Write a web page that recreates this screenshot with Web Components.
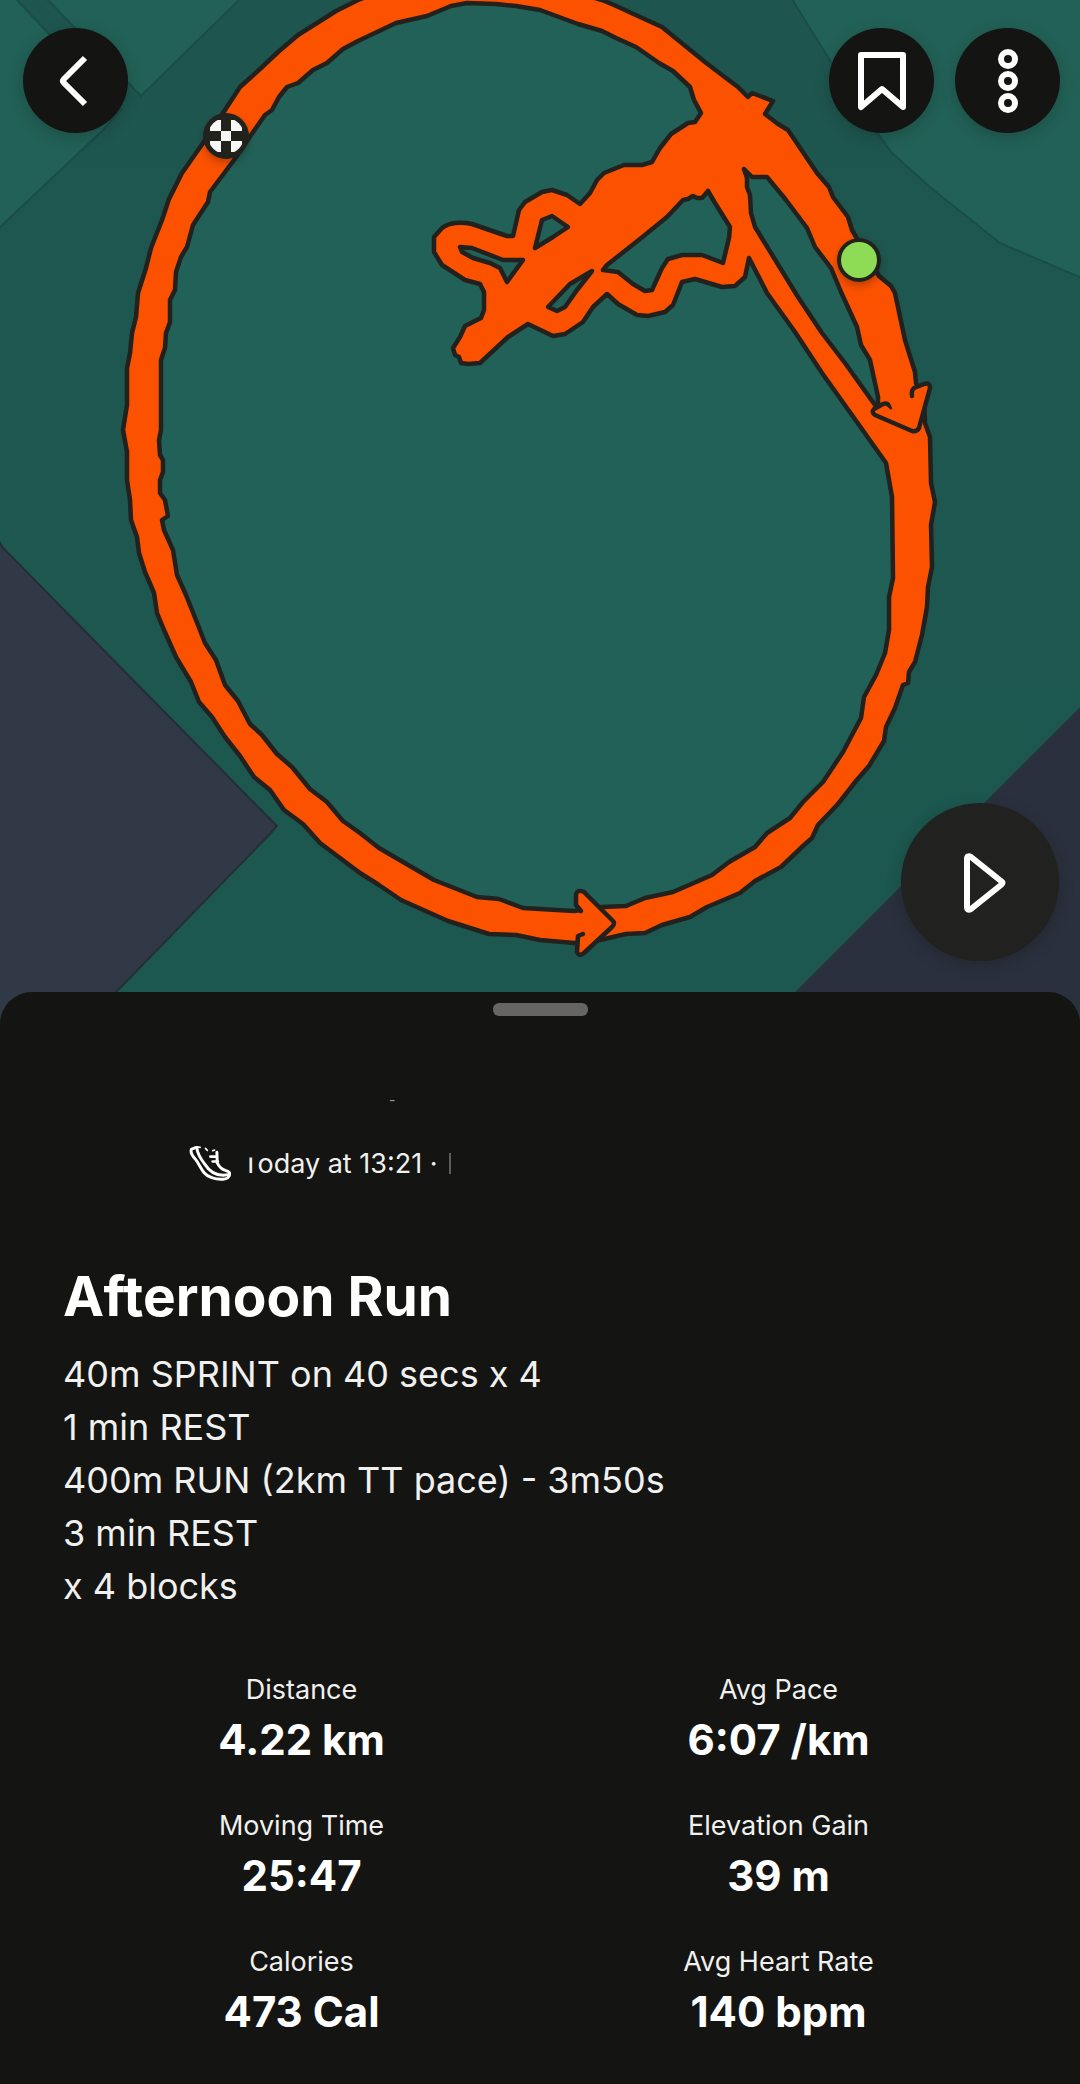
<!DOCTYPE html>
<html lang="en">
<head>
<meta charset="utf-8">
<meta name="viewport" content="width=device-width, initial-scale=1">
<title>Afternoon Run</title>
<style>
  :root {
    --surface: #141412;
    --text: #f0f0ee;
    --text-strong: #fff;
    --route: #fc5200;
    --route-edge: #22211e;
    --gutter: 63px;
  }
  body {
    margin: 0;
    background: var(--surface);
    color: var(--text);
    font-family: Inter, "Liberation Sans", sans-serif;
  }
</style>
</head>
<body>
<activity-page>
  <activity-map slot="map"></activity-map>
  <round-button slot="nav" label="Back">
    <svg viewBox="0 0 105 105"><path d="M62 30 41 51Q39 53 41 55L62 76"/></svg>
  </round-button>
  <round-button slot="actions" label="Save">
    <svg viewBox="0 0 105 105"><path d="M32 79V27H74V79L53 61Z"/></svg>
  </round-button>
  <round-button slot="actions" label="More">
    <svg viewBox="0 0 105 105"><circle cx="53" cy="31" r="7"/><circle cx="53" cy="53" r="7"/><circle cx="53" cy="75" r="7"/></svg>
  </round-button>
  <round-button slot="play" label="Play" size="large">
    <svg viewBox="0 0 158 158"><path d="M70 54Q66 52 66 56V104Q66 108 70 106L100 82Q103 80 100 78Z"/></svg>
  </round-button>

  <activity-sheet>
    <activity-meta slot="meta"></activity-meta>
    <span slot="title">Afternoon Run</span>
    <span slot="description">40m SPRINT on 40 secs x 4
1 min REST
400m RUN (2km TT pace) - 3m50s
3 min REST
x 4 blocks</span>
    <activity-stat label="Distance">4.22 km</activity-stat>
    <activity-stat label="Avg Pace">6:07 /km</activity-stat>
    <activity-stat label="Moving Time">25:47</activity-stat>
    <activity-stat label="Elevation Gain">39 m</activity-stat>
    <activity-stat label="Calories">473 Cal</activity-stat>
    <activity-stat label="Avg Heart Rate">140 bpm</activity-stat>
  </activity-sheet>
</activity-page>

<script>
function define(name, html, setup) {
  const template = document.createElement('template');
  template.innerHTML = html;
  customElements.define(name, class extends HTMLElement {
    constructor() {
      super();
      this.attachShadow({ mode: 'open' });
      this.shadowRoot.appendChild(template.content.cloneNode(true));
    }
    connectedCallback() {
      if (setup) setup(this, this.shadowRoot);
    }
  });
}

define('activity-page', `
  <style>
    :host { display: block; }
    .hero { position: relative; }
    /* controls float over the map */
    .bar {
      position: absolute;
      inset: 0 0 auto 0;
      display: flex;
      justify-content: space-between;
      padding: 28px 20px 0 23px;
    }
    .actions { display: flex; gap: 21px; }
    .play { position: absolute; right: 21px; bottom: 63px; }
  </style>
  <div class="hero">
    <slot name="map"></slot>
    <div class="bar">
      <slot name="nav"></slot>
      <div class="actions"><slot name="actions"></slot></div>
    </div>
    <div class="play"><slot name="play"></slot></div>
  </div>
  <slot></slot>
`);

define('round-button', `
  <style>
    :host { display: block; }
    button {
      display: block;
      width: 105px;
      height: 105px;
      padding: 0;
      border: 0;
      border-radius: 50%;
      background: var(--surface);
      box-shadow: 0 4px 16px rgba(0, 0, 0, 0.2);
      cursor: pointer;
    }
    :host([size="large"]) button {
      width: 158px;
      height: 158px;
      background: #21221f;
    }
    ::slotted(svg) {
      display: block;
      width: 100%;
      height: 100%;
      fill: none;
      stroke: #fff;
      stroke-width: 6;
      stroke-linejoin: round;
    }
  </style>
  <button type="button"><slot></slot></button>
`, (el, root) => {
  root.querySelector('button').setAttribute('aria-label', el.getAttribute('label'));
});

define('activity-map', `
  <style>
    :host { display: block; }
    svg { display: block; width: 100%; height: auto; }
    .field { fill: #226157; stroke: #1a4d47; stroke-width: 2; }
    .block { fill: #303945; stroke: #252e38; stroke-width: 2; }
    .road { fill: #2a303d; }
    .outer { fill: var(--route); }
    .hole { fill: #226157; }
    .outer, .hole, .edge { stroke: var(--route-edge); stroke-width: 4.5; stroke-linejoin: round; }
    .edge { fill: var(--route); stroke-linecap: round; }
  </style>
  <svg viewBox="0 0 1080 1024" role="img" aria-label="Route map">
    <defs>
      <linearGradient id="ground" x1="0" y1="0" x2="0" y2="1">
        <stop offset="0" stop-color="#1e564f"/>
        <stop offset="1" stop-color="#1c584f"/>
      </linearGradient>
      <clipPath id="disc"><circle cx="226" cy="136" r="18"/></clipPath>
      <filter id="soft" x="-50%" y="-50%" width="200%" height="200%"><feDropShadow dx="0" dy="4" stdDeviation="4" flood-opacity="0.25"/></filter>
    </defs>
    <rect width="1080" height="1024" fill="url(#ground)"/>
    <path class="field" d="M-4-4H14L17 0 121 110 103 130 0 227-4 231Z"/>
    <path class="field" d="M44-4 141 96 243-4Z"/>
    <path class="field" d="M790-4 831 62 879 135 891 152 931 188 1000 243 1084 279V-4Z"/>
    <path class="block" d="M-4 536 3 548 269 818 271 820 277 826 269 835 85 1024V1028H-4Z"/>
    <path class="road" d="M1080 707 763 1024H1080Z"/>

    <path class="outer" d="M358 0 336 11 298 35 278 52 260 69 240 87 225 110 203 143 182 173 169 199 162 220 151 248 146 268 138 293 136 317 132 333 130 353 127 368 127 405 123 430 127 452 127 480 130 500 131 520 137 537 139 553 145 572 154 593 157 613 164 630 176 657 191 682 199 702 212 717 225 737 240 756 254 777 270 790 284 810 303 824 320 843 360 873 379 885 401 900 448 921 489 934 516 935 540 940 574 943 600 940 626 934 645 933 662 925 690 917 707 907 740 893 755 881 781 867 803 846 812 838 818 825 838 804 856 781 869 766 884 741 886 727 895 708 903 685 908 683 909 672 915 662 922 635 927 607 928 587 932 567 931 525 935 502 931 483 930 437 925 423 924 400 916 383 915 372 905 340 895 293 891 286 879 276 852 230 848 217 833 197 829 187 817 173 788 130 778 124 765 114 773 101 760 96 752 93 748 97 738 87 726 78 705 62 662 27 614 5 602 0 560-12 480-18 390-12Z"/>
    <path class="hole" d="M251 135 265 115 272 110 279 97 287 87 298 83 313 70 327 63 343 49 358 41 396 23 427 16 451 6 467 3 496 4 516 6 540 10 578 24 602 31 616 38 636 47 659 63 673 71 690 87 694 100 701 113 695 122 688 123 671 134 660 148 652 162 642 165 624 165 604 173 597 180 590 193 580 204 567 195 552 190 542 192 525 202 519 210 513 236 507 236 472 224Q463 222 455 223 447 224 442 228L434 237V252L442 265 465 280 480 284 484 292V310L481 318 465 326 460 337 453 348 455 355 459 357 461 363 468 364 480 363 508 337 528 324 553 336 565 334 583 322 593 307 607 294 618 304 637 315 648 316 665 312 673 305 682 282 695 279 722 287 735 286 745 277 749 258 767 293 795 332 822 373 864 432 886 463 892 497 893 578 889 597 889 630 885 653 876 675 864 697 861 718 843 752 823 782 803 802 790 818 767 833 755 847 729 862 712 875 673 892 645 898 626 906 602 907 574 911 540 909 523 908 499 899 477 897 434 880 379 848 360 833 343 821 327 802 310 789 292 767 277 754 262 735 250 724 238 701 225 685 216 660 205 643 198 625 186 595 177 575 173 550 164 530 162 520 168 516 165 500 160 493 160 480 163 472 163 460 160 455 159 440 161 430 161 360 165 348 166 333 170 322 170 300 175 290 176 272 181 257 187 247 193 225 208 202 210 192 234 160Z"/>
    <path class="hole" d="M744 169 752 177 767 177 786 200 807 228 815 247 831 268 841 292 857 327 861 345 870 360 878 397V407L875 405 845 363 822 333 798 297 755 227 751 213 750 195 747 187V178Z"/>
    <path class="hole" d="M607 265 640 239 667 217 683 200 688 199 693 196 697 198 702 198 708 191 715 203 730 227 729 238 723 263 702 255H682L668 259 662 268 652 290 645 291 633 284 618 272 603 270Z"/>
    <path class="hole" d="M548 307 570 284 592 271 577 290 565 307 557 311Z"/>
    <path class="hole" d="M535 248 542 220 552 216 568 227 553 237Z"/>
    <path class="hole" d="M460 247 472 248 503 260H523L507 282 500 268 490 263 473 258 462 252Z"/>

    <!-- direction arrows -->
    <path class="edge" d="M583 934 578 936 577 952Q579 957 584 953L612 927Q616 923 612 920L584 892Q578 889 576 894V905L581 911"/>
    <path class="edge" d="M891 407Q887 402 883 404L874 409Q871 412 875 415L912 431Q917 432 919 428L930 388Q930 382 924 384L914 388Q911 391 912 396"/>
    <path d="M885 392 909 388 910 412 893 410Z" fill="var(--route)"/>

    <!-- finish and start pins -->
    <g filter="url(#soft)">
      <circle cx="226" cy="136" r="23" fill="#22211f"/>
      <path clip-path="url(#disc)" fill="#f7f7f5" d="M210 120h11v11h-11ZM231 120h11v11h-11ZM221 131h10v10h-10ZM210 141h11v11h-11ZM231 141h11v11h-11Z"/>
    </g>
    <g filter="url(#soft)">
      <circle cx="859" cy="260" r="22" fill="#22211f"/>
      <circle cx="859" cy="260" r="18" fill="#8edc55"/>
    </g>
  </svg>
`);

define('activity-sheet', `
  <style>
    :host {
      display: block;
      position: relative;
      margin-top: -32px;
      padding: 11px var(--gutter) 48px;
      border-radius: 32px 32px 0 0;
      background: var(--surface);
    }
    .handle {
      width: 95px;
      height: 13px;
      margin: 0 auto;
      border-radius: 6px;
      background: #666563;
    }
    h1 {
      margin: 0;
      padding-top: 78px;
      color: var(--text-strong);
      font-size: 55px;
      font-weight: 700;
      line-height: 72px;
    }
    p {
      margin: 16px 0 0;
      font-size: 36px;
      line-height: 53px;
      white-space: pre-line;
    }
    .stats {
      display: grid;
      grid-template-columns: 1fr 1fr;
      gap: 44px 0;
      padding-top: 59px;
    }
  </style>
  <div class="handle"></div>
  <slot name="meta"></slot>
  <h1><slot name="title"></slot></h1>
  <p><slot name="description"></slot></p>
  <div class="stats"><slot></slot></div>
`);

define('activity-meta', `
  <style>
    :host {
      display: block;
      padding: 66px 0 0 126px;
    }
    .name {
      padding-left: 200px;
      font-size: 14px;
      line-height: 36px;
      color: #a0a09e;
    }
    .when {
      display: flex;
      align-items: center;
      gap: 11px;
      margin-top: 27px;
      font-size: 27px;
      line-height: 36px;
    }
    svg {
      flex: none;
      width: 42px;
      height: 37px;
      fill: none;
      stroke: #fff;
      stroke-width: 9;
      stroke-linecap: round;
      stroke-linejoin: round;
    }
    /* only the stem of the first letter shows */
    .cut { display: inline-block; margin-right: -2px; clip-path: inset(12px 0 0 7px); }
    .more { width: 2px; height: 21px; background: #5c5c5a; }
  </style>
  <div class="name">-</div>
  <div class="when">
    <svg viewBox="86 196 128 112" aria-hidden="true">
      <path d="M108 203 94 208C88 218 96 228 105 238 116 252 122 268 132 280 142 292 165 302 190 300 203 299 209 293 210 285 211 278 205 275 197 273 187 270 178 262 172 250L171 218"/>
      <path d="M110 205C112 225 122 238 134 254 146 273 165 288 190 288L206 286"/>
      <path d="M151 231H168M158 246H174" stroke-width="8"/>
      <path d="M110 201 120 203M136 206 142 212M158 213 164 211" stroke-width="5"/>
    </svg>
    <span><span class="cut">T</span>oday at 13:21 ·</span>
    <span class="more"></span>
  </div>
`);

define('activity-stat', `
  <style>
    :host {
      display: flex;
      flex-direction: column;
      align-items: center;
      gap: 8px;
      text-align: center;
    }
    .label { font-size: 27px; line-height: 36px; }
    .value {
      color: var(--text-strong);
      font-size: 42px;
      font-weight: 700;
      line-height: 48px;
    }
  </style>
  <span class="label"></span>
  <span class="value"><slot></slot></span>
`, (el, root) => {
  root.querySelector('.label').textContent = el.getAttribute('label');
});
</script>
</body>
</html>
